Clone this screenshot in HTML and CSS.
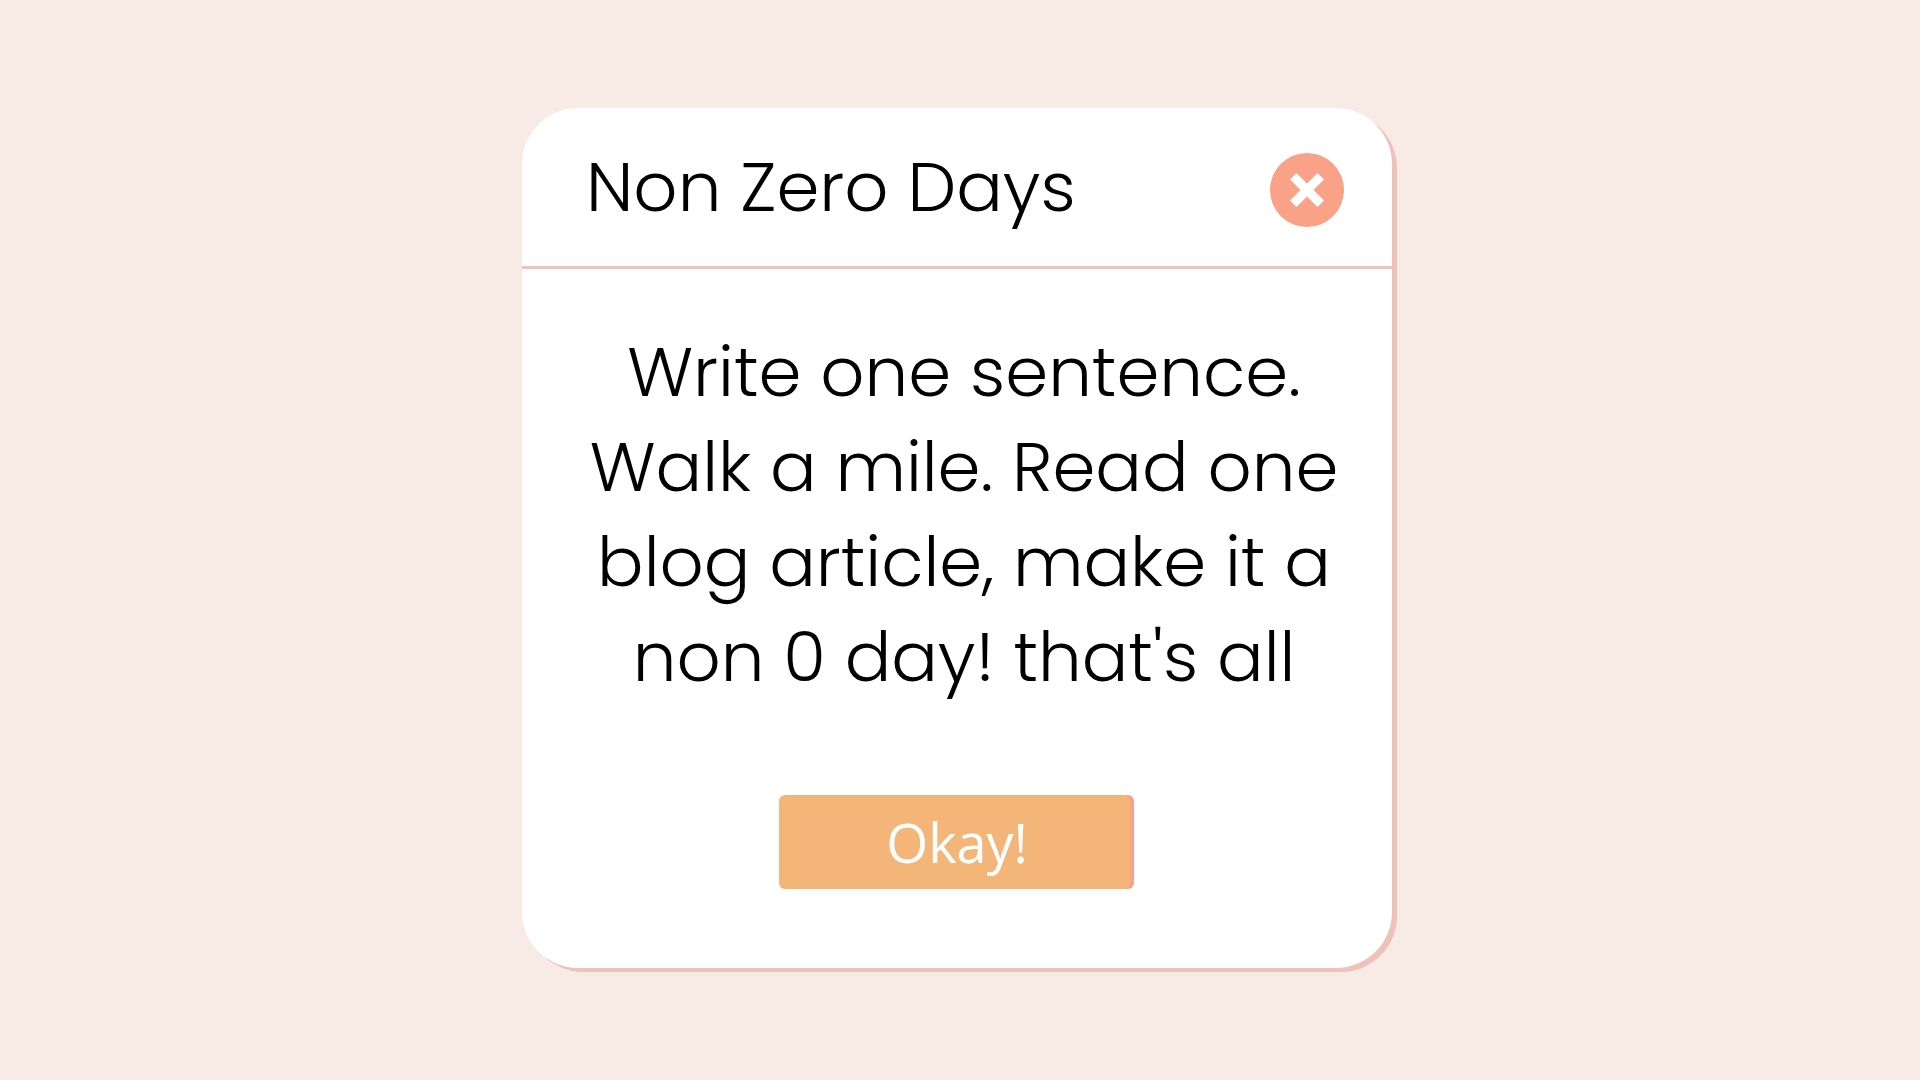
FILE: index.html
```html
<!DOCTYPE html>
<html lang="en">
<head>
<meta charset="utf-8">
<meta name="viewport" content="width=device-width, initial-scale=1">
<title>Non Zero Days</title>
<link rel="stylesheet" href="styles.css">
</head>
<body>
<main class="dialog" role="dialog" aria-labelledby="dialog-title">
  <header class="dialog-header">
    <h1 class="dialog-title" id="dialog-title">Non Zero Days</h1>
    <button class="close-button" type="button" aria-label="Close">
      <svg class="close-icon" viewBox="0 0 34 34" aria-hidden="true">
        <path d="M6.500 0 17 10.500 27.500 0 34 6.500 23.500 17 34 27.500 27.500 34 17 23.500 6.500 34 0 27.500 10.500 17 0 6.500Z" fill="currentColor"/>
      </svg>
    </button>
  </header>
  <div class="dialog-body">
    <p class="message">Write one sentence.<br>Walk a mile. Read one<br>blog article, make it a<br>non 0 day! that's all</p>
    <button class="okay-button" type="button">Okay!</button>
  </div>
</main>
</body>
</html>
```
FILE: styles.css
```css
* {
  box-sizing: border-box;
}

body {
  margin: 0;
  min-height: 100vh;
  padding: 16px 22px 20px 16px;
  display: flex;
  align-items: center;
  justify-content: center;
  background: #f8eae5;
  color: #000;
  font-family: Poppins, Inter, sans-serif;
  font-weight: 300;
  font-kerning: none;
}

.dialog {
  width: 100%;
  max-width: 870px;
  border-radius: 56px;
  background: #fff;
  box-shadow: 5px 4px 0 #eec1bb;
}

.dialog-header {
  display: flex;
  align-items: center;
  justify-content: space-between;
  padding: 32px 48px 32px 64px;
  border-bottom: 3px solid #eec1bb;
}

.dialog-title {
  margin: 0;
  font-size: 69px;
  line-height: 94px;
  font-weight: 300;
}

.close-button {
  display: flex;
  align-items: center;
  justify-content: center;
  flex: none;
  width: 74px;
  height: 74px;
  margin-top: 6px;
  padding: 0;
  border: 0;
  border-radius: 50%;
  background: #faa288;
  color: #fff;
  cursor: pointer;
}

.close-icon {
  width: 34px;
  height: 34px;
}

.dialog-body {
  display: flex;
  flex-direction: column;
  align-items: center;
  padding: 56px 48px 79px;
}

.message {
  margin: 0;
  padding-left: 14px;
  font-size: 69px;
  line-height: 95px;
  text-align: center;
}

.okay-button {
  width: 100%;
  max-width: 351px;
  height: 94px;
  margin: 90px 6px 0 0;
  padding: 0 0 0 6px;
  border: 0;
  border-radius: 6px;
  background: #f4b678;
  box-shadow: 4px 0 0 #faa288;
  color: #fff;
  font-family: "Open Sans", sans-serif;
  font-size: 54px;
  font-weight: 400;
  font-kerning: none;
  cursor: pointer;
}
```
